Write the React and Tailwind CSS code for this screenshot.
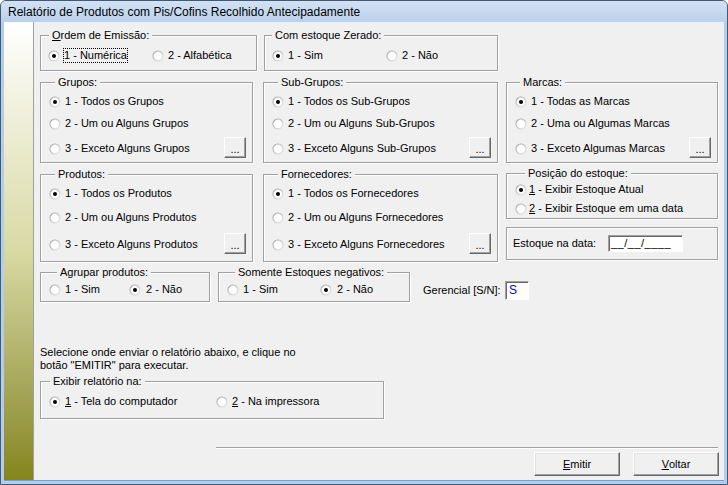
import React from "react";

const RadioDot = ({ on }) => (
	<svg width="12" height="12" viewBox="0 0 12 12" className="shrink-0">
		<defs>
			<linearGradient id="rdo" x1="0" y1="0" x2="1" y2="1">
				<stop offset="0" stopColor="#8a8a8a" />
				<stop offset="1" stopColor="#f4f4f4" />
			</linearGradient>
		</defs>
		<circle cx="6" cy="6" r="5.5" fill="url(#rdo)" />
		<circle cx="6" cy="6" r="4.5" fill="#fff" stroke="#d8d8d8" strokeWidth="0.6" />
		{on && <circle cx="6" cy="6" r="2" fill="#000" />}
	</svg>
);

const Radio = ({ on, label, className = "", gap = "ml-[4px]", focus }) => (
	<div className={`flex items-center h-[13px] ${className}`}>
		<RadioDot on={on} />
		<span
			className={`${gap} whitespace-nowrap leading-[13px] ${
				focus ? "outline outline-1 outline-dotted outline-black" : ""
			}`}
		>
			{label}
		</span>
	</div>
);

const Group = ({ title, legend = "left-[9px]", className = "", children }) => (
	<div
		className={`relative border border-[#a0a0a0] shadow-[inset_1px_1px_0_#fff,1px_1px_0_#fff] ${className}`}
	>
		<span
			className={`absolute -top-[7px] ${legend} bg-[#f0f0f0] px-[3px] leading-[13px] whitespace-nowrap`}
		>
			{title}
		</span>
		{children}
	</div>
);

const DotsButton = () => (
	<button className="w-[22px] h-[21px] mb-[3px] border border-t-white border-l-white border-r-[#696969] border-b-[#696969] shadow-[inset_-1px_-1px_0_#a0a0a0] bg-[#f0f0f0] text-[11px] leading-[11px] pb-[2px] flex items-end justify-center">
		...
	</button>
);

const Button = ({ children }) => (
	<button className="w-[86px] h-[24px] border border-t-white border-l-white border-r-[#696969] border-b-[#696969] shadow-[inset_-1px_-1px_0_#a0a0a0,inset_1px_1px_0_#e3e3e3] bg-[#f0f0f0] text-[11px] flex items-center justify-center">
		{children}
	</button>
);

// grupo de 3 opcoes com botao "..." na ultima linha
const TripleGroup = ({ title, legend, width, height, pl, gaps, options }) => (
	<Group title={title} legend={legend} className={`${width} ${height} pt-[12px] ${pl} pr-[6px]`}>
		<Radio on label={options[0]} />
		<Radio label={options[1]} className={gaps[0]} />
		<div className={`flex items-center justify-between h-[13px] ${gaps[1]}`}>
			<Radio label={options[2]} />
			<DotsButton />
		</div>
	</Group>
);

const App = () => {
	return (
		<div className="w-[728px] h-[485px] bg-[#b4cde9] border border-[#445a73] rounded-t-[6px] flex flex-col overflow-hidden font-['Liberation_Sans',Arial,sans-serif] text-[11px] text-black">
			{/* Title bar */}
			<div className="h-[21px] shrink-0 bg-linear-to-b from-[#d3e2f4] to-[#b9d1ea] px-[7px] flex items-center text-[12px] leading-none">
				Relatório de Produtos com Pis/Cofins Recolhido Antecipadamente
			</div>

			<div className="flex-1 flex mx-[3px] mb-[3px] border-b border-[#6f9fd4]">
				{/* Left strip */}
				<div className="w-[30px] shrink-0 bg-linear-to-b from-[#ffffff] via-[#d9d9a4] to-[#85851a] border-r border-[#a0a0a0]"></div>

				<div className="flex-1 bg-[#f0f0f0] flex flex-col">
					{/* Row 1 */}
					<div className="flex mt-[13px] ml-[6px]">
						<Group
							title={
								<>
									<u>O</u>rdem de Emissão:
								</>
							}
							legend="left-[8px]"
							className="w-[217px] h-[36px] pt-[13px] pl-[7px] flex items-start"
						>
							<Radio on focus className="w-[104px]" label="1 - Numérica" />
							<Radio label="2 - Alfabética" />
						</Group>
						<Group
							title="Com estoque Zerado:"
							legend="left-[7px]"
							className="ml-[7px] w-[234px] h-[36px] pt-[13px] pl-[7px] flex items-start"
						>
							<Radio on className="w-[114px]" label="1 - Sim" />
							<Radio label="2 - Não" />
						</Group>
					</div>

					{/* Row 2 */}
					<div className="flex mt-[11px] ml-[6px]">
						<TripleGroup
							title="Grupos:"
							legend="left-[14px]"
							width="w-[213px]"
							height="h-[81px]"
							pl="pl-[8px]"
							gaps={["mt-[9px]", "mt-[12px]"]}
							options={["1 - Todos os Grupos", "2 - Um ou Alguns Grupos", "3 - Exceto Alguns Grupos"]}
						/>
						<div className="ml-[10px]">
							<TripleGroup
								title="Sub-Grupos:"
								legend="left-[14px]"
								width="w-[235px]"
								height="h-[81px]"
								pl="pl-[8px]"
								gaps={["mt-[9px]", "mt-[12px]"]}
								options={[
									"1 - Todos os Sub-Grupos",
									"2 - Um ou Alguns Sub-Grupos",
									"3 - Exceto Alguns Sub-Grupos",
								]}
							/>
						</div>
						<div className="ml-[8px]">
							<TripleGroup
								title="Marcas:"
								legend="left-[13px]"
								width="w-[212px]"
								height="h-[81px]"
								pl="pl-[8px]"
								gaps={["mt-[9px]", "mt-[12px]"]}
								options={[
									"1 - Todas as Marcas",
									"2 - Uma ou Algumas Marcas",
									"3 - Exceto Algumas Marcas",
								]}
							/>
						</div>
					</div>

					{/* Row 3 */}
					<div className="flex items-start mt-[11px] ml-[6px]">
						<TripleGroup
							title="Produtos:"
							legend="left-[14px]"
							width="w-[213px]"
							height="h-[88px]"
							pl="pl-[8px]"
							gaps={["mt-[11px]", "mt-[14px]"]}
							options={["1 - Todos os Produtos", "2 - Um ou Alguns Produtos", "3 - Exceto Alguns Produtos"]}
						/>
						<div className="ml-[10px]">
							<TripleGroup
								title="Fornecedores:"
								legend="left-[14px]"
								width="w-[235px]"
								height="h-[88px]"
								pl="pl-[8px]"
								gaps={["mt-[11px]", "mt-[14px]"]}
								options={[
									"1 - Todos os Fornecedores",
									"2 - Um ou Alguns Fornecedores",
									"3 - Exceto Alguns Fornecedores",
								]}
							/>
						</div>
						<div className="ml-[8px] -mt-[1px] flex flex-col">
							<Group
								title="Posição do estoque:"
								legend="left-[18px]"
								className="w-[212px] h-[46px] pt-[9px] pl-[8px]"
							>
								<Radio
									on
									gap="ml-[2px]"
									label={
										<>
											<u>1</u> - Exibir Estoque Atual
										</>
									}
								/>
								<Radio
									gap="ml-[2px]"
									className="mt-[6px]"
									label={
										<>
											<u>2</u> - Exibir Estoque em uma data
										</>
									}
								/>
							</Group>
							<Group title="" className="mt-[8px] w-[212px] h-[33px] pl-[6px] flex items-center">
								<span className="w-[95px]">Estoque na data:</span>
								<div className="w-[75px] h-[17px] bg-white border border-t-[#a0a0a0] border-l-[#a0a0a0] border-r-white border-b-white shadow-[inset_1px_1px_0_#696969] pl-[2px] text-[11px] leading-[14px] tracking-[0.5px]">
									__/__/____
								</div>
							</Group>
						</div>
					</div>

					{/* Row 4 */}
					<div className="flex items-start mt-[10px] ml-[6px]">
						<Group
							title="Agrupar produtos:"
							legend="left-[16px]"
							className="w-[170px] h-[30px] pt-[10px] pl-[8px] flex items-start"
						>
							<Radio className="w-[80px]" label="1 - Sim" />
							<Radio on gap="ml-[5px]" label="2 - Não" />
						</Group>
						<Group
							title="Somente Estoques negativos:"
							legend="left-[16px]"
							className="ml-[8px] w-[192px] h-[30px] pt-[10px] pl-[8px] flex items-start"
						>
							<Radio className="w-[93px]" label="1 - Sim" />
							<Radio on gap="ml-[5px]" label="2 - Não" />
						</Group>
						<div className="ml-[13px] mt-[9px] flex items-center h-[19px]">
							<span className="w-[82px] whitespace-nowrap">Gerencial [S/N]:</span>
							<div className="w-[24px] h-[19px] bg-white border border-t-[#a0a0a0] border-l-[#a0a0a0] border-r-white border-b-white shadow-[inset_1px_1px_0_#696969] pl-[3px] text-[12px] leading-[17px] text-[#0000ff]">
								S
							</div>
						</div>
					</div>

					{/* Instructions */}
					<div className="mt-[44px] ml-[6px] leading-[13px]">
						<div>Selecione onde enviar o relatório abaixo, e clique no</div>
						<div>botão "EMITIR" para executar.</div>
					</div>

					{/* Row 5 */}
					<div className="mt-[9px] ml-[6px]">
						<Group
							title="Exibir relatório na:"
							legend="left-[9px]"
							className="w-[344px] h-[38px] pt-[13px] pl-[8px] flex items-start"
						>
							<Radio
								on
								className="w-[167px]"
								label={
									<>
										<u>1</u> - Tela do computador
									</>
								}
							/>
							<Radio
								label={
									<>
										<u>2</u> - Na impressora
									</>
								}
							/>
						</Group>
					</div>

					{/* Separator */}
					<div className="mt-[28px] ml-[182px] w-[502px] border-t border-t-[#a0a0a0] border-b border-b-white"></div>

					{/* Buttons */}
					<div className="mt-[3px] flex justify-end gap-[13px] pr-[5px]">
						<Button>
							<u>E</u>mitir
						</Button>
						<Button>
							<u>V</u>oltar
						</Button>
					</div>
				</div>
			</div>
		</div>
	);
};

export default App;
